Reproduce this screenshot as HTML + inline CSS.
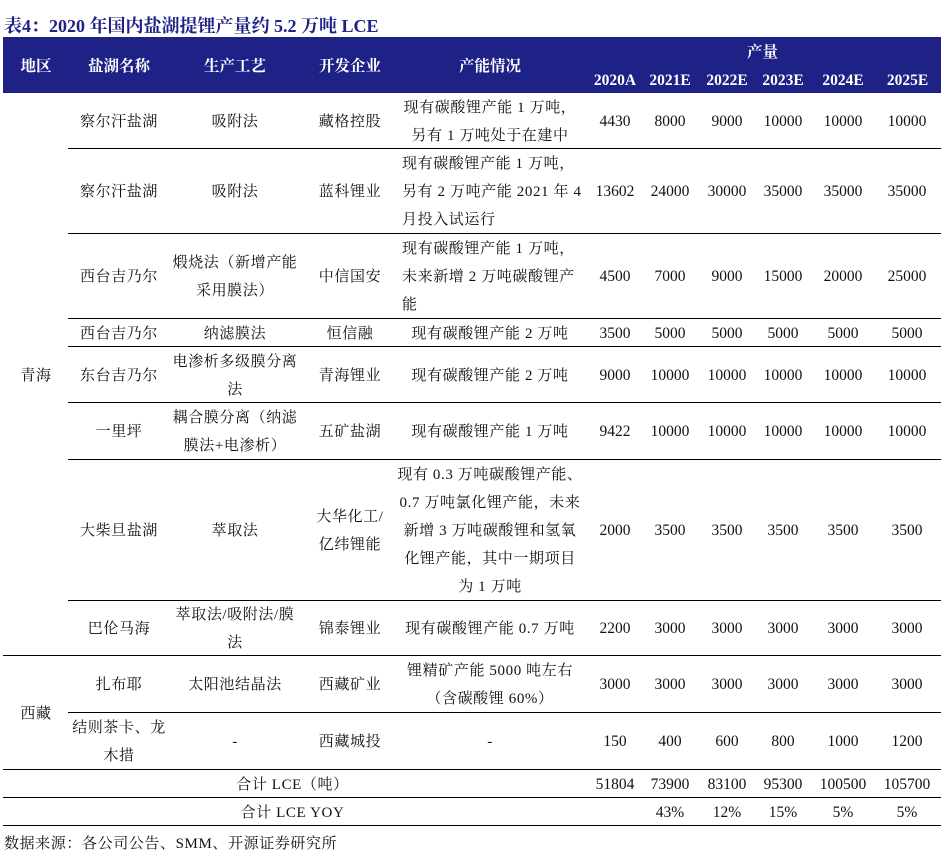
<!DOCTYPE html>
<html><head><meta charset="utf-8"><style>
*{margin:0;padding:0;box-sizing:border-box}
body{width:942px;height:863px;background:#fff;position:relative;overflow:hidden;font-family:"Liberation Serif","Noto Serif CJK SC",serif;color:#111;font-size:15px}
.c{position:absolute;display:flex;align-items:center;justify-content:center;text-align:center;line-height:28px;white-space:nowrap;padding-top:3px;letter-spacing:0.6px}
.n{letter-spacing:0;font-size:15.5px}
.hl{position:absolute;height:1px;background:#000}
.hd{position:absolute;left:3px;top:37px;width:938px;height:56px;background:#1e2186}
.h{position:absolute;color:#fff;font-weight:bold;font-size:15.5px;display:flex;align-items:center;justify-content:center;white-space:nowrap}
.title{position:absolute;left:4px;top:12px;font-size:18px;font-weight:bold;color:#1e2186}
</style></head><body>
<div class="title">表4：2020 年国内盐湖提锂产量约 5.2 万吨 LCE</div>
<div class="hd"></div>
<div class="h" style="left:0;width:72px;top:37px;height:56px">地区</div>
<div class="h" style="left:68px;width:102px;top:37px;height:56px">盐湖名称</div>
<div class="h" style="left:175px;width:120px;top:37px;height:56px">生产工艺</div>
<div class="h" style="left:295px;width:110px;top:37px;height:56px">开发企业</div>
<div class="h" style="left:395px;width:190px;top:37px;height:56px">产能情况</div>
<div class="h" style="left:590px;width:345px;top:38px;height:26px">产量</div>
<div class="h" style="left:590px;width:50px;top:68px;height:26px">2020A</div>
<div class="h" style="left:645px;width:50px;top:68px;height:26px">2021E</div>
<div class="h" style="left:702px;width:50px;top:68px;height:26px">2022E</div>
<div class="h" style="left:758px;width:50px;top:68px;height:26px">2023E</div>
<div class="h" style="left:818px;width:50px;top:68px;height:26px">2024E</div>
<div class="h" style="left:880px;width:55px;top:68px;height:26px">2025E</div>

<div class="hl" style="left:68px;width:873px;top:148px"></div>
<div class="hl" style="left:68px;width:873px;top:233px"></div>
<div class="hl" style="left:68px;width:873px;top:318px"></div>
<div class="hl" style="left:68px;width:873px;top:346px"></div>
<div class="hl" style="left:68px;width:873px;top:402px"></div>
<div class="hl" style="left:68px;width:873px;top:459px"></div>
<div class="hl" style="left:68px;width:873px;top:600px"></div>
<div class="hl" style="left:3px;width:938px;top:655px"></div>
<div class="hl" style="left:68px;width:873px;top:712px"></div>
<div class="hl" style="left:3px;width:938px;top:769px"></div>
<div class="hl" style="left:3px;width:938px;top:797px"></div>
<div class="hl" style="left:3px;width:938px;top:825px"></div>

<div class="c" style="left:0;width:72px;top:93px;height:562px">青海</div>
<div class="c" style="left:0;width:72px;top:655px;height:114px">西藏</div>

<div class="c" style="left:68px;width:102px;top:93px;height:55px">察尔汗盐湖</div>
<div class="c" style="left:175px;width:120px;top:93px;height:55px">吸附法</div>
<div class="c" style="left:295px;width:110px;top:93px;height:55px">藏格控股</div>
<div class="c" style="left:395px;width:190px;top:93px;height:55px">现有碳酸锂产能 1 万吨，<br>另有 1 万吨处于在建中</div>

<div class="c" style="left:68px;width:102px;top:148px;height:85px">察尔汗盐湖</div>
<div class="c" style="left:175px;width:120px;top:148px;height:85px">吸附法</div>
<div class="c" style="left:295px;width:110px;top:148px;height:85px">蓝科锂业</div>
<div class="c" style="left:395px;width:190px;top:148px;height:85px;justify-content:flex-start;text-align:left;padding-left:7px">现有碳酸锂产能 1 万吨，<br>另有 2 万吨产能 2021 年 4<br>月投入试运行</div>

<div class="c" style="left:68px;width:102px;top:233px;height:85px">西台吉乃尔</div>
<div class="c" style="left:175px;width:120px;top:233px;height:85px">煅烧法（新增产能<br>采用膜法）</div>
<div class="c" style="left:295px;width:110px;top:233px;height:85px">中信国安</div>
<div class="c" style="left:395px;width:190px;top:233px;height:85px;justify-content:flex-start;text-align:left;padding-left:7px">现有碳酸锂产能 1 万吨，<br>未来新增 2 万吨碳酸锂产<br>能</div>

<div class="c" style="left:68px;width:102px;top:318px;height:28px">西台吉乃尔</div>
<div class="c" style="left:175px;width:120px;top:318px;height:28px">纳滤膜法</div>
<div class="c" style="left:295px;width:110px;top:318px;height:28px">恒信融</div>
<div class="c" style="left:395px;width:190px;top:318px;height:28px">现有碳酸锂产能 2 万吨</div>

<div class="c" style="left:68px;width:102px;top:346px;height:56px">东台吉乃尔</div>
<div class="c" style="left:175px;width:120px;top:346px;height:56px">电渗析多级膜分离<br>法</div>
<div class="c" style="left:295px;width:110px;top:346px;height:56px">青海锂业</div>
<div class="c" style="left:395px;width:190px;top:346px;height:56px">现有碳酸锂产能 2 万吨</div>

<div class="c" style="left:68px;width:102px;top:402px;height:57px">一里坪</div>
<div class="c" style="left:175px;width:120px;top:402px;height:57px">耦合膜分离（纳滤<br>膜法+电渗析）</div>
<div class="c" style="left:295px;width:110px;top:402px;height:57px">五矿盐湖</div>
<div class="c" style="left:395px;width:190px;top:402px;height:57px">现有碳酸锂产能 1 万吨</div>

<div class="c" style="left:68px;width:102px;top:459px;height:141px">大柴旦盐湖</div>
<div class="c" style="left:175px;width:120px;top:459px;height:141px">萃取法</div>
<div class="c" style="left:295px;width:110px;top:459px;height:141px">大华化工/<br>亿纬锂能</div>
<div class="c" style="left:395px;width:190px;top:459px;height:141px">现有 0.3 万吨碳酸锂产能、<br>0.7 万吨氯化锂产能，未来<br>新增 3 万吨碳酸锂和氢氧<br>化锂产能，其中一期项目<br>为 1 万吨</div>

<div class="c" style="left:68px;width:102px;top:600px;height:55px">巴伦马海</div>
<div class="c" style="left:175px;width:120px;top:600px;height:55px">萃取法/吸附法/膜<br>法</div>
<div class="c" style="left:295px;width:110px;top:600px;height:55px">锦泰锂业</div>
<div class="c" style="left:395px;width:190px;top:600px;height:55px">现有碳酸锂产能 0.7 万吨</div>

<div class="c" style="left:68px;width:102px;top:655px;height:57px">扎布耶</div>
<div class="c" style="left:175px;width:120px;top:655px;height:57px">太阳池结晶法</div>
<div class="c" style="left:295px;width:110px;top:655px;height:57px">西藏矿业</div>
<div class="c" style="left:395px;width:190px;top:655px;height:57px">锂精矿产能 5000 吨左右<br>（含碳酸锂 60%）</div>

<div class="c" style="left:68px;width:102px;top:712px;height:57px">结则茶卡、龙<br>木措</div>
<div class="c" style="left:175px;width:120px;top:712px;height:57px">-</div>
<div class="c" style="left:295px;width:110px;top:712px;height:57px">西藏城投</div>
<div class="c" style="left:395px;width:190px;top:712px;height:57px">-</div>

<div class="c" style="left:0;width:585px;top:769px;height:28px">合计 LCE（吨）</div>
<div class="c" style="left:0;width:585px;top:797px;height:28px">合计 LCE YOY</div>

<div id="nums"></div>
<script>
var xs=[588,643,700,756,814,876],ws=[54,54,54,54,58,62];
var rows=[[93,55,["4430","8000","9000","10000","10000","10000"]],
[148,85,["13602","24000","30000","35000","35000","35000"]],
[233,85,["4500","7000","9000","15000","20000","25000"]],
[318,28,["3500","5000","5000","5000","5000","5000"]],
[346,56,["9000","10000","10000","10000","10000","10000"]],
[402,57,["9422","10000","10000","10000","10000","10000"]],
[459,141,["2000","3500","3500","3500","3500","3500"]],
[600,55,["2200","3000","3000","3000","3000","3000"]],
[655,57,["3000","3000","3000","3000","3000","3000"]],
[712,57,["150","400","600","800","1000","1200"]],
[769,28,["51804","73900","83100","95300","100500","105700"]],
[797,28,["","43%","12%","15%","5%","5%"]]];
var h="";rows.forEach(function(r){r[2].forEach(function(v,i){h+='<div class="c n" style="left:'+xs[i]+'px;width:'+ws[i]+'px;top:'+r[0]+'px;height:'+r[1]+'px">'+v+'</div>';});});
document.getElementById("nums").innerHTML=h;
</script>
<div style="position:absolute;left:4px;top:832px;font-size:15px;letter-spacing:0.6px">数据来源：各公司公告、SMM、开源证券研究所</div>
</body></html>
